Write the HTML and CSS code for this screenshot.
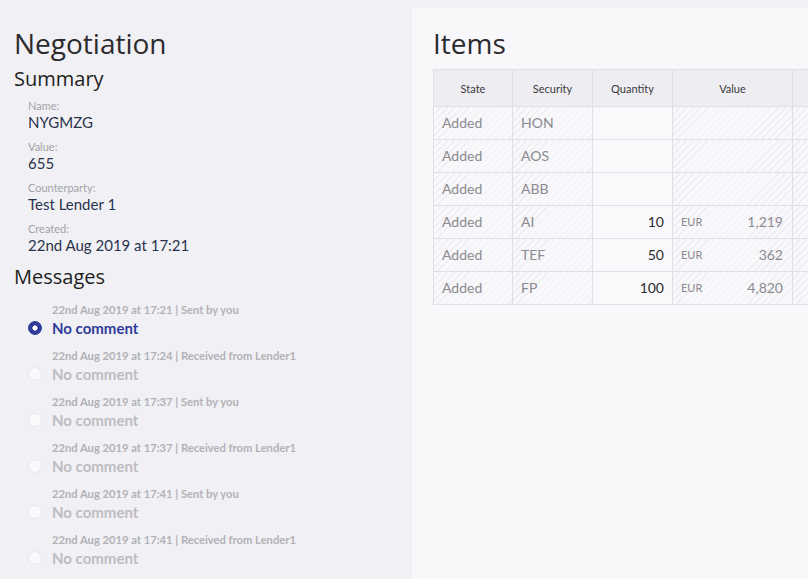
FILE: index.html
```html
<!DOCTYPE html>
<html>
<head>
<meta charset="utf-8">
<link rel="stylesheet" href="styles.css">
</head>
<body>
<div class="page">
  <aside class="left">
    <h1 class="title">Negotiation</h1>
    <h2 class="section">Summary</h2>
    <div class="fields">
      <div class="field"><div class="label">Name:</div><div class="value">NYGMZG</div></div>
      <div class="field"><div class="label">Value:</div><div class="value">655</div></div>
      <div class="field"><div class="label">Counterparty:</div><div class="value">Test Lender 1</div></div>
      <div class="field"><div class="label">Created:</div><div class="value">22nd Aug 2019 at 17:21</div></div>
    </div>
    <h2 class="section messages-title">Messages</h2>
    <div class="messages">
      <div class="msg selected">
        <div class="meta">22nd Aug 2019 at 17:21 | Sent by you</div>
        <div class="line"><span class="radio"></span><span class="text">No comment</span></div>
      </div>
      <div class="msg">
        <div class="meta">22nd Aug 2019 at 17:24 | Received from Lender1</div>
        <div class="line"><span class="radio"></span><span class="text">No comment</span></div>
      </div>
      <div class="msg">
        <div class="meta">22nd Aug 2019 at 17:37 | Sent by you</div>
        <div class="line"><span class="radio"></span><span class="text">No comment</span></div>
      </div>
      <div class="msg">
        <div class="meta">22nd Aug 2019 at 17:37 | Received from Lender1</div>
        <div class="line"><span class="radio"></span><span class="text">No comment</span></div>
      </div>
      <div class="msg">
        <div class="meta">22nd Aug 2019 at 17:41 | Sent by you</div>
        <div class="line"><span class="radio"></span><span class="text">No comment</span></div>
      </div>
      <div class="msg">
        <div class="meta">22nd Aug 2019 at 17:41 | Received from Lender1</div>
        <div class="line"><span class="radio"></span><span class="text">No comment</span></div>
      </div>
    </div>
  </aside>
  <main class="right">
    <h1 class="title">Items</h1>
    <table class="items">
      <colgroup>
        <col class="c-state"><col class="c-sec"><col class="c-qty"><col class="c-val"><col class="c-extra">
      </colgroup>
      <thead>
        <tr><th>State</th><th>Security</th><th>Quantity</th><th>Value</th><th></th></tr>
      </thead>
      <tbody>
        <tr><td class="h">Added</td><td class="h">HON</td><td class="qty"></td><td class="h"></td><td class="h"></td></tr>
        <tr><td class="h">Added</td><td class="h">AOS</td><td class="qty"></td><td class="h"></td><td class="h"></td></tr>
        <tr><td class="h">Added</td><td class="h">ABB</td><td class="qty"></td><td class="h"></td><td class="h"></td></tr>
        <tr><td class="h">Added</td><td class="h">AI</td><td class="qty">10</td><td class="h val"><div class="money"><span class="cur">EUR</span><span class="amt">1,219</span></div></td><td class="h"></td></tr>
        <tr><td class="h">Added</td><td class="h">TEF</td><td class="qty">50</td><td class="h val"><div class="money"><span class="cur">EUR</span><span class="amt">362</span></div></td><td class="h"></td></tr>
        <tr><td class="h">Added</td><td class="h">FP</td><td class="qty">100</td><td class="h val"><div class="money"><span class="cur">EUR</span><span class="amt">4,820</span></div></td><td class="h"></td></tr>
      </tbody>
    </table>
  </main>
</div>
</body>
</html>
```

FILE: styles.css
```css
html, body {
  margin: 0;
  padding: 0;
}
body {
  width: 808px;
  height: 579px;
  overflow: hidden;
  background: #f1f0f4;
  font-family: Lato, "Open Sans", sans-serif;
}
.page {
  display: flex;
  height: 579px;
}
.left {
  width: 412px;
  flex: none;
  box-sizing: border-box;
  padding: 24px 0 0 14px;
}
.title {
  margin: 0;
  font-family: "Open Sans", Lato, sans-serif;
  font-weight: 400;
  font-size: 28px;
  line-height: 38px;
  color: #2b2b2e;
}
.left > .title {
  margin-bottom: 4px;
}
.section {
  margin: 0;
  font-family: "Open Sans", Lato, sans-serif;
  font-weight: 400;
  font-size: 20px;
  line-height: 26px;
  color: #1e1e22;
}
.fields {
  padding: 7px 0 0 14px;
  display: flex;
  flex-direction: column;
  gap: 8px;
}
.label {
  font-size: 11px;
  line-height: 14px;
  color: #a3a3a8;
}
.value {
  font-size: 15px;
  line-height: 19px;
  color: #2a334d;
}
.messages-title {
  margin-top: 9px;
}
.messages {
  padding: 13px 0 0 14px;
  display: flex;
  flex-direction: column;
  gap: 11px;
}
.meta {
  padding-left: 24px;
  font-size: 11.2px;
  font-weight: 700;
  line-height: 14px;
  color: #b2b2b6;
}
.line {
  display: flex;
  align-items: center;
  gap: 10px;
  height: 21px;
}
.radio {
  width: 14px;
  height: 14px;
  border-radius: 50%;
  box-sizing: border-box;
  background: #fafafc;
  border: 1px solid #e8e7ee;
  flex: none;
}
.text {
  font-size: 15px;
  font-weight: 700;
  color: #bdbdc1;
}
.selected .radio {
  border-color: #2f3c9a;
  background: radial-gradient(circle, #ffffff 0 2.3px, #2f3c9a 2.9px);
}
.selected .text {
  color: #2f3c9a;
}
.right {
  flex: 1;
  margin-top: 8px;
  background: #f8f7fa;
  padding: 16px 0 0 21px;
  overflow: hidden;
}
.right .title {
  margin-bottom: 7px;
}
.items {
  border-collapse: collapse;
  table-layout: fixed;
  width: 480px;
}
.c-state { width: 79px; }
.c-sec { width: 80px; }
.c-qty { width: 80px; }
.c-val { width: 120px; }
.c-extra { width: 121px; }
.items th, .items td {
  border: 1px solid #dedfe8;
  padding: 0 8px;
}
.items th {
  height: 36px;
  background: #eeedf1;
  font-size: 11px;
  font-weight: 400;
  color: #3a3a3e;
  text-align: center;
}
.items td {
  height: 32px;
  font-size: 14px;
  line-height: 18px;
  color: #8b8b90;
  background: #f9f8fb;
}
.items td.h {
  background: repeating-linear-gradient(135deg, #f9f8fb 0 4px, #ecebf0 4px 5px);
}
.items td.qty {
  text-align: right;
  color: #2b2b30;
  background: #f9f8fb;
}
.money {
  display: flex;
  align-items: center;
  justify-content: space-between;
  white-space: nowrap;
}
.cur {
  font-size: 11px;
}
.items td.val {
  padding-right: 9px;
}
```
